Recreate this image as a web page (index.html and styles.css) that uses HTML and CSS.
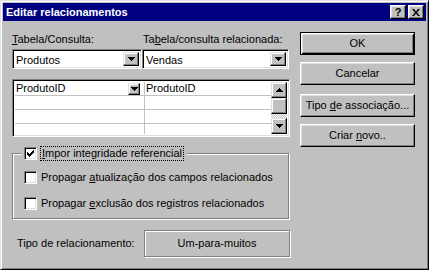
FILE: index.html
```html
<!DOCTYPE html>
<html lang="pt">
<head>
  <meta charset="UTF-8" />
  <title>Editar relacionamentos</title>
  <link rel="stylesheet" href="styles.css">
</head>
<body>
  <div class="window">
    <div class="titlebar">
      <span class="title">Editar relacionamentos</span>
      <div class="caption-buttons">
        <span class="cap-btn help">?</span>
        <span class="cap-btn close">
          <svg width="8" height="7" viewBox="0 0 8 7"><path d="M0 0h2l2 2.5L6 0h2L5 3.5 8 7H6L4 4.5 2 7H0l3-3.5z" fill="#000"/></svg>
        </span>
      </div>
    </div>

    <div class="content">
      <div class="left">
        <div class="labels">
          <span class="label first"><u>T</u>abela/Consulta:</span>
          <span class="label">Ta<u>b</u>ela/consulta relacionada:</span>
        </div>

        <div class="combos">
          <div class="combo first">
            <span class="combo-text">Produtos</span>
            <span class="drop">
              <svg width="7" height="4" viewBox="0 0 7 4"><path d="M0 0h7v1h-1v1h-1v1h-1v1h-1v-1h-1v-1h-1v-1h-1z" fill="#000"/></svg>
            </span>
          </div>
          <div class="combo second">
            <span class="combo-text">Vendas</span>
            <span class="drop">
              <svg width="7" height="4" viewBox="0 0 7 4"><path d="M0 0h7v1h-1v1h-1v1h-1v1h-1v-1h-1v-1h-1v-1h-1z" fill="#000"/></svg>
            </span>
          </div>
        </div>

        <div class="grid">
          <div class="rows">
            <div class="row">
              <div class="cell c1">
                <span class="cell-text">ProdutoID</span>
                <span class="cell-drop">
                  <svg width="7" height="4" viewBox="0 0 7 4"><path d="M0 0h7v1h-1v1h-1v1h-1v1h-1v-1h-1v-1h-1v-1h-1z" fill="#000"/></svg>
                </span>
              </div>
              <div class="cell c2">ProdutoID</div>
            </div>
            <div class="row"><div class="cell c1"></div><div class="cell c2"></div></div>
            <div class="row"><div class="cell c1"></div><div class="cell c2"></div></div>
            <div class="row"><div class="cell c1"></div><div class="cell c2"></div></div>
          </div>
          <div class="scrollbar">
            <span class="sb-btn">
              <svg width="7" height="4" viewBox="0 0 7 4"><path d="M3 0h1v1h1v1h1v1h1v1h-7v-1h1v-1h1v-1h1z" fill="#000"/></svg>
            </span>
            <span class="sb-thumb"></span>
            <span class="sb-track"></span>
            <span class="sb-btn">
              <svg width="7" height="4" viewBox="0 0 7 4"><path d="M0 0h7v1h-1v1h-1v1h-1v1h-1v-1h-1v-1h-1v-1h-1z" fill="#000"/></svg>
            </span>
          </div>
        </div>

        <fieldset class="group">
          <legend>
            <span class="check">
              <svg width="13" height="13" viewBox="0 0 13 13"><path d="M3 5h1v1h1v1h1v-1h1v-1h1v-1h1v-1h1v3h-1v1h-1v1h-1v1h-1v1h-1v-1h-1v-1h-1z" fill="#000"/></svg>
            </span>
            <span class="focus"><u>I</u>mpor integridade referencial</span>
          </legend>
          <div class="opt first">
            <span class="check"></span>
            <span class="opt-text">Propagar <u>a</u>tualização dos campos relacionados</span>
          </div>
          <div class="opt">
            <span class="check"></span>
            <span class="opt-text">Propagar <u>e</u>xclusão dos registros relacionados</span>
          </div>
        </fieldset>

        <div class="reltype">
          <span class="rel-label">Tipo de relacionamento:</span>
          <div class="relbox">Um-para-muitos</div>
        </div>
      </div>

      <div class="buttons">
        <button class="btn default">OK</button>
        <button class="btn cancel">Cancelar</button>
        <button class="btn join">Tipo <u>d</u>e associação...</button>
        <button class="btn new">Criar <u>n</u>ovo..</button>
      </div>
    </div>
  </div>
</body>
</html>
```

FILE: styles.css
```css
* {
  box-sizing: border-box;
}
body {
  margin: 0;
  background: #c0c0c0;
  font-family: "Liberation Sans", Arial, sans-serif;
  font-size: 11px;
  line-height: 13px;
  color: #000;
}
u {
  text-decoration-thickness: 1px;
  text-underline-offset: 1px;
}
.window {
  width: 429px;
  height: 270px;
  background: #c0c0c0;
  border: 1px solid;
  border-color: #dfdfdf #000 #000 #dfdfdf;
  box-shadow: inset 1px 1px #fff, inset -1px -1px #808080;
  padding: 2px;
}
.titlebar {
  height: 18px;
  background: #000080;
  color: #fff;
  display: flex;
  align-items: center;
  justify-content: space-between;
  padding: 0 2px 0 3px;
}
.title {
  font-weight: bold;
  font-size: 11px;
}
.caption-buttons {
  display: flex;
  gap: 2px;
}
.cap-btn {
  width: 16px;
  height: 14px;
  background: #c0c0c0;
  color: #000;
  border: 1px solid;
  border-color: #fff #000 #000 #fff;
  box-shadow: inset -1px -1px #808080, inset 1px 1px #dfdfdf;
  display: flex;
  align-items: center;
  justify-content: center;
  font-weight: bold;
  font-size: 11px;
  line-height: 11px;
}
.content {
  display: flex;
  padding-left: 9px;
}
.left {
  width: 278px;
  padding-top: 12px;
}
.labels {
  display: flex;
}
.label.first {
  width: 131px;
}
.combos {
  display: flex;
  margin-top: 3px;
}
.combo {
  height: 20px;
  background: #fff;
  border: 1px solid;
  border-color: #808080 #fff #fff #808080;
  box-shadow: inset 1px 1px #000, inset -1px -1px #dfdfdf;
  display: flex;
  align-items: stretch;
  padding: 2px;
}
.combo.first {
  width: 130px;
}
.combo.second {
  width: 147px;
}
.combo-text {
  flex: 1;
  padding-left: 1px;
  line-height: 16px;
}
.drop, .sb-btn, .sb-thumb, .cell-drop {
  background: #c0c0c0;
  border: 1px solid;
  border-color: #dfdfdf #000 #000 #dfdfdf;
  box-shadow: inset -1px -1px #808080, inset 1px 1px #fff;
  display: flex;
  align-items: center;
  justify-content: center;
}
.drop {
  width: 16px;
}
.grid {
  margin-top: 10px;
  height: 58px;
  background: #fff;
  border: 1px solid;
  border-color: #808080 #fff #fff #808080;
  box-shadow: inset 1px 1px #000, inset -1px -1px #dfdfdf;
  padding: 2px;
  display: flex;
}
.rows {
  flex: 1;
  overflow: hidden;
}
.row {
  display: flex;
  height: 14px;
  border-bottom: 1px solid #c0c0c0;
}
.cell {
  line-height: 13px;
  padding-left: 1px;
}
.cell.c1 {
  width: 130px;
  border-right: 1px solid #c0c0c0;
  display: flex;
  align-items: flex-end;
}
.cell.c2 {
  flex: 1;
}
.cell-text {
  flex: 1;
  align-self: center;
}
.cell-drop {
  width: 12px;
  height: 12px;
  margin-right: 4px;
}
.scrollbar {
  width: 16px;
  display: flex;
  flex-direction: column;
}
.sb-btn, .sb-thumb {
  height: 16px;
}
.sb-track {
  flex: 1;
  background: repeating-conic-gradient(#fff 0 25%, #c0c0c0 0 50%) 0 0 / 2px 2px;
}
.group {
  margin: 9px 0 0 0;
  width: 277px;
  border: 1px solid #808080;
  box-shadow: inset 1px 1px #fff, 1px 1px #fff;
  padding: 0 0 8px 9px;
  min-width: 0;
}
.group legend {
  display: flex;
  align-items: center;
  gap: 3px;
  padding: 0 3px 0 2px;
  background: #c0c0c0;
}
.check {
  width: 13px;
  height: 13px;
  background: #fff;
  border: 1px solid;
  border-color: #808080 #fff #fff #808080;
  box-shadow: inset 1px 1px #000, inset -1px -1px #dfdfdf;
  flex: none;
  position: relative;
}
.check svg {
  position: absolute;
  left: -1px;
  top: -1px;
}
.focus {
  border: 1px dotted #000;
  padding: 0 1px;
  line-height: 13px;
}
.opt {
  display: flex;
  align-items: center;
  gap: 4px;
  height: 13px;
  margin-top: 13px;
  padding-left: 2px;
}
.opt.first {
  margin-top: 10px;
}
.opt-text {
  white-space: nowrap;
}
.reltype {
  margin-top: 11px;
  display: flex;
  align-items: center;
  justify-content: space-between;
  padding-left: 5px;
}
.relbox {
  width: 146px;
  height: 27px;
  border: 1px solid #808080;
  box-shadow: inset 1px 1px #fff, 1px 1px #fff;
  display: flex;
  align-items: center;
  justify-content: center;
}
.buttons {
  margin-left: 10px;
  padding-top: 11px;
  display: flex;
  flex-direction: column;
}
.btn {
  width: 115px;
  height: 23px;
  padding: 0;
  font: inherit;
  color: #000;
  background: #c0c0c0;
  border: 1px solid;
  border-color: #fff #000 #000 #fff;
  box-shadow: inset -1px -1px #808080, inset 1px 1px #dfdfdf;
}
.btn.default {
  border-color: #000;
  box-shadow: inset 1px 1px #fff, inset -1px -1px #000, inset 2px 2px #dfdfdf, inset -2px -2px #808080;
}
.btn.cancel {
  margin-top: 7px;
}
.btn.join {
  margin-top: 9px;
}
.btn.new {
  margin-top: 7px;
}
```
